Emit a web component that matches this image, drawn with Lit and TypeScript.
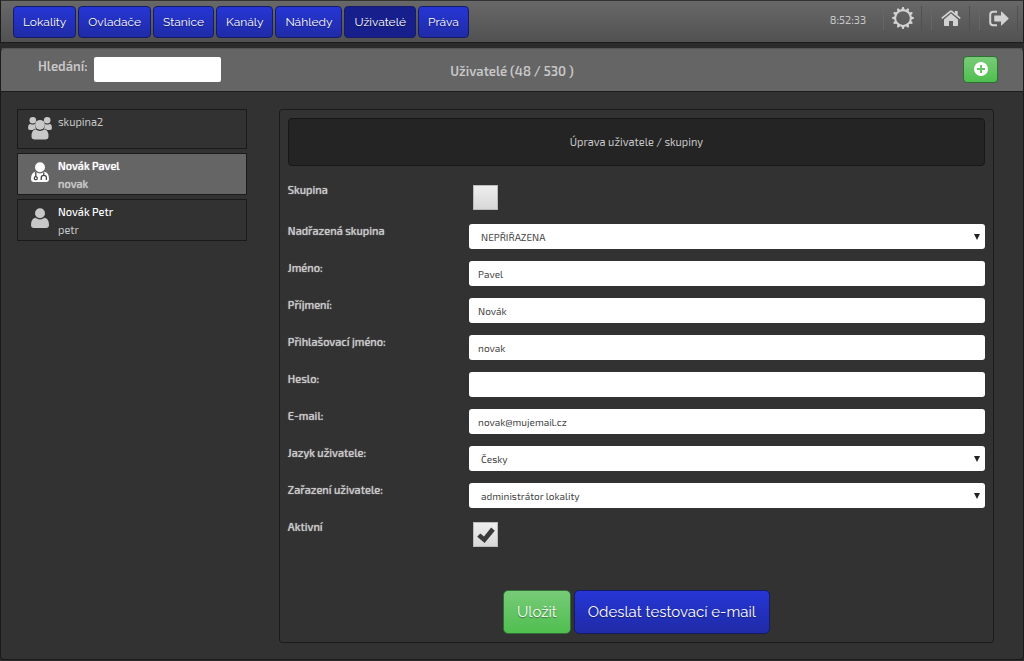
import { LitElement, html, css, svg, nothing } from "lit";
import { customElement, state } from "lit/decorators.js";

type IconName = "gear" | "home" | "exit" | "plus" | "group" | "medic" | "user" | "check";

const gearTeeth = Array.from({ length: 12 }, (_, i) => {
  const at = (deg: number, r: number) => {
    const a = ((deg - 90) * Math.PI) / 180;
    return `${(12 + r * Math.cos(a)).toFixed(2)} ${(12 + r * Math.sin(a)).toFixed(2)}`;
  };
  const d = i * 30;
  return `${i ? "L" : "M"}${at(d - 10, 9.6)}L${at(d - 4, 11.9)}L${at(d + 4, 11.9)}L${at(d + 10, 9.6)}`;
}).join("");

const icons: Record<IconName, { box: string; art: unknown }> = {
  gear: {
    box: "0 0 24 24",
    art: svg`<path fill-rule="evenodd" d="${gearTeeth}ZM12 4.500a7.500 7.500 0 1 0 0 15a7.500 7.500 0 1 0 0-15Z"/>`,
  },
  home: {
    box: "0 0 20 17",
    art: svg`<path d="M10 3.6 17 9.4V15.3Q17 16 16.3 16H12V11H8V16H3.7Q3 16 3 15.300V9.400Z"/><path d="M10 .2Q10.600.2 11.200.7L14 3V1H16.700V5.200L19.800 7.800 18.700 9.100 10 2 1.300 9.100.2 7.800 8.800.7Q9.400.2 10 .2Z"/>`,
  },
  exit: {
    box: "0 0 20 16",
    art: svg`<path d="M8 1.200H4.200Q1.200 1.200 1.200 4.200V11.800Q1.200 14.800 4.200 14.800H8" fill="none" stroke="currentColor" stroke-width="2"/><path d="M6 5H12V1.500Q12 .6 12.800 1.200L19.400 7.400Q20 8 19.400 8.600L12.800 14.800Q12 15.400 12 14.500V11H6Q5.200 11 5.200 10.200V5.800Q5.200 5 6 5Z"/>`,
  },
  plus: {
    box: "0 0 14 14",
    art: svg`<path fill-rule="evenodd" d="M7 0a7 7 0 1 1 0 14A7 7 0 0 1 7 0ZM6 3V6H3V8H6V11H8V8H11V6H8V3Z"/>`,
  },
  group: {
    box: "0 0 24 23",
    art: svg`<circle cx="4.800" cy="3.800" r="3.300"/><circle cx="19.200" cy="3.800" r="3.300"/><path d="M2 7.200Q4.500 8.800 7 7.600 6.400 10 8 12.200Q6 12.300 4.800 13.500H2.200Q0 13.500 0 11.500 0 8 2 7.200ZM22 7.200Q19.500 8.800 17 7.600 17.600 10 16 12.200 18 12.300 19.200 13.500H21.800Q24 13.500 24 11.500 24 8 22 7.200Z"/><circle cx="12" cy="8.300" r="4.900"/><path d="M7.500 12.800Q12 16 16.500 12.800 20.500 13.500 20.500 20 20.500 23 17.300 23H6.700Q3.500 23 3.500 20 3.500 13.500 7.500 12.800Z"/>`,
  },
  medic: {
    box: "0 0 18 20",
    art: svg`<circle cx="9" cy="5.200" r="5"/><path d="M4.500 9.800Q9 13 13.500 9.800 18 10.700 18 17 18 20 15 20H3Q0 20 0 17 0 10.700 4.500 9.800Z"/><g fill="none" stroke="#444" stroke-width="1.300"><path d="M4.800 10V14.800"/><circle cx="4.800" cy="16.200" r="1.500"/><path d="M12.800 10.500V13.200M10.200 18V15.700Q10.200 13.300 12.800 13.300T15.400 15.700V18"/></g>`,
  },
  user: {
    box: "0 0 18 20",
    art: svg`<circle cx="9" cy="5.200" r="5"/><path d="M4.500 9.800Q9 13 13.500 9.800 18 10.700 18 17 18 20 15 20H3Q0 20 0 17 0 10.700 4.500 9.800Z"/>`,
  },
  check: {
    box: "0 0 18 18",
    art: svg`<path d="M3.300 7.400 7 10.500 14.200 1.400 17.800 4.700 7.600 17 .2 10.700Z"/>`,
  },
};

const icon = (name: IconName, size: string) =>
  html`<svg class="icon ${size}" viewBox=${icons[name].box} aria-hidden="true">${icons[name].art}</svg>`;

interface Field {
  id: string;
  label: string;
  kind: "text" | "password" | "email" | "select";
  value: string;
}

const fields: Field[] = [
  { id: "parent", label: "Nadřazená skupina", kind: "select", value: "NEPŘIŘAZENA" },
  { id: "first", label: "Jméno:", kind: "text", value: "Pavel" },
  { id: "last", label: "Příjmení:", kind: "text", value: "Novák" },
  { id: "login", label: "Přihlašovací jméno:", kind: "text", value: "novak" },
  { id: "password", label: "Heslo:", kind: "password", value: "" },
  { id: "email", label: "E-mail:", kind: "email", value: "novak@mujemail.cz" },
  { id: "language", label: "Jazyk uživatele:", kind: "select", value: "Česky" },
  { id: "role", label: "Zařazení uživatele:", kind: "select", value: "administrátor lokality" },
];

const people: { icon: IconName; name?: string; login: string }[] = [
  { icon: "group", login: "skupina2" },
  { icon: "medic", name: "Novák Pavel", login: "novak" },
  { icon: "user", name: "Novák Petr", login: "petr" },
];

@customElement("app-root")
export class AppRoot extends LitElement {
  @state() private tab = "Uživatelé";
  @state() private selected = 1;
  @state() private isGroup = false;
  @state() private active = true;

  static styles = css`
    :host {
      display: flex;
      flex-direction: column;
      min-height: 100vh;
      box-sizing: border-box;
      background: #2b2b2b;
      color: #c8c8c8;
      font: 11px/18px "Exo 2", Roboto, "Open Sans", sans-serif;
    }
    *, *::before { box-sizing: border-box; }
    button, input, select { font: inherit; margin: 0; }
    button { cursor: pointer; }
    .icon { display: block; fill: currentColor; flex: none; }
    .i24 { width: 24px; height: 24px; }
    .i22 { width: 22px; height: 22px; }
    .i20 { width: 20px; height: 17px; }
    .i18 { width: 18px; height: 20px; }
    .i14 { width: 14px; height: 14px; }

    .topbar {
      display: flex;
      align-items: flex-start;
      height: 43px;
      padding: 5px 5px 0 12px;
      border: 1px solid #1c1c1c;
      border-top-color: #333;
      background: linear-gradient(#686868, #515151);
    }
    .tabs { display: flex; gap: 2px; }
    .btn {
      border: 1px solid #151b66;
      border-radius: 4px;
      background: linear-gradient(#2636d6, #1f2ba6);
      color: #fff;
      font-family: Raleway, Lato, sans-serif;
      text-shadow: 0 1px 1px rgba(0, 0, 0, 0.4);
      white-space: nowrap;
    }
    .tab { height: 32px; padding: 0 9px; font-size: 12px; }
    .tab.on { background: #161f8c; }
    .tools { display: flex; align-items: flex-start; margin-left: auto; }
    .clock { margin: 5px 17px 0 0; }
    .toolset { display: flex; gap: 9px; }
    .tool {
      display: flex;
      align-items: center;
      justify-content: center;
      width: 39px;
      height: 24px;
      color: #d2d2d2;
      border-left: 1px solid #666;
      border-right: 1px solid #505050;
    }

    .subbar {
      display: grid;
      grid-template-columns: 1fr auto 1fr;
      align-items: center;
      height: 44px;
      margin-top: 5px;
      padding: 0 25px 2px;
      border: 1px solid #1c1c1c;
      border-top-color: #555;
      border-radius: 4px 4px 0 0;
      background: #656565;
      font-size: 13px;
      font-weight: 600;
    }
    .search { display: flex; align-items: flex-start; gap: 7px; padding-left: 12px; }
    .search input {
      width: 127px;
      height: 25px;
      padding: 0 8px;
      border: 0;
      border-radius: 2px;
      background: #fff;
    }
    .title { margin: 0; padding-top: 4px; font: inherit; }
    .add {
      display: grid;
      place-items: center;
      justify-self: end;
      width: 35px;
      height: 27px;
      padding: 0;
    }
    .green {
      background: linear-gradient(#78cb78, #4fbf4f);
      border-color: #2f6e35;
    }

    .body {
      flex: 1;
      display: grid;
      grid-template-columns: 9fr 28fr;
      gap: 32px;
      align-items: start;
      padding: 17px 29px 16px 16px;
      border: 1px solid #1a1a1a;
      border-top: 0;
      border-radius: 0 0 4px 4px;
      margin-bottom: 1px;
      background: #323232;
    }
    .list { display: grid; gap: 4px; margin: 0; padding: 0; list-style: none; }
    .person {
      display: grid;
      grid-template-columns: 24px 1fr;
      gap: 6px;
      width: 100%;
      min-height: 40px;
      padding: 3px 10px 1px;
      border: 1px solid #1a1a1a;
      background: none;
      color: inherit;
      text-align: left;
      align-content: start;
    }
    .person.on { background: #656565; }
    .person .icon { justify-self: center; margin-top: 5px; }
    .person .i24 { margin-top: 3px; }
    .person.on .icon { color: #fff; }
    .lines { display: grid; align-content: start; }
    .name { color: #fff; font-weight: 500; }
    .person.on .lines { text-shadow: 0 0 1px currentColor; }
    .person.on .login { font-weight: 500; }

    .panel {
      padding: 8px;
      border: 1px solid #1a1a1a;
      border-radius: 3px;
    }
    .heading {
      margin: 0 0 17px;
      padding: 14px;
      border: 1px solid #171717;
      border-radius: 4px;
      background: #242424;
      font: inherit;
      text-align: center;
    }
    .form { display: grid; gap: 12px; }
    .row { display: grid; grid-template-columns: 26% 1fr; align-items: start; min-height: 25px; }
    .row label { line-height: 14px; font-weight: 500; text-shadow: 0 0 1px currentColor; }
    .first { margin-bottom: 2px; }
    .control {
      width: 100%;
      height: 25px;
      padding: 0 9px;
      border: 0;
      border-radius: 3px;
      background: #fff;
      color: #444;
      font-size: 10px;
    }
    .pick { display: grid; align-items: center; }
    .pick > * { grid-area: 1 / 1; }
    .pick select { appearance: none; padding-left: 12px; padding-right: 20px; }
    .pick svg {
      justify-self: end;
      width: 6px;
      height: 6px;
      margin-right: 5px;
      fill: #222;
      pointer-events: none;
    }
    .tick { display: grid; justify-items: center; align-items: center; width: 25px; margin: 2px 0 0 4px; }
    .tick > * { grid-area: 1 / 1; }
    .tick input {
      appearance: none;
      width: 25px;
      height: 25px;
      border: 1px solid #bbb;
      background: linear-gradient(#eee, #d8d8d8);
    }
    .tick svg { width: 18px; height: 18px; color: #3a3a3a; pointer-events: none; }
    .actions { display: flex; justify-content: center; gap: 3px; margin-top: 31px; }
    .big { height: 44px; padding: 0 13px; font-size: 15px; border-radius: 5px; }
  `;

  private renderField(f: Field) {
    return html`<div class="row">
      <label for=${f.id}>${f.label}</label>
      ${f.kind === "select"
        ? html`<div class="pick">
            <select class="control" id=${f.id}><option>${f.value}</option></select>
            <svg viewBox="0 0 6 6" aria-hidden="true"><path d="M0 0H6L3 6Z" /></svg>
          </div>`
        : html`<input class="control" id=${f.id} type=${f.kind} .value=${f.value} />`}
    </div>`;
  }

  private renderTick(id: string, label: string, on: boolean, set: (v: boolean) => void, extra = "") {
    return html`<div class="row ${extra}">
      <label for=${id}>${label}</label>
      <div class="tick">
        <input type="checkbox" id=${id} .checked=${on}
          @change=${(e: Event) => set((e.target as HTMLInputElement).checked)} />
        ${on ? icon("check", "") : nothing}
      </div>
    </div>`;
  }

  render() {
    const tabs = ["Lokality", "Ovladače", "Stanice", "Kanály", "Náhledy", "Uživatelé", "Práva"];
    return html`
      <header class="topbar">
        <nav class="tabs">
          ${tabs.map((t) => html`<button class="btn tab ${t === this.tab ? "on" : ""}"
            @click=${() => (this.tab = t)}>${t}</button>`)}
        </nav>
        <div class="tools">
          <time class="clock">8:52:33</time>
          <div class="toolset">
            <a class="tool" href="#settings" aria-label="Nastavení">${icon("gear", "i22")}</a>
            <a class="tool" href="#home" aria-label="Domů">${icon("home", "i20")}</a>
            <a class="tool" href="#logout" aria-label="Odhlásit">${icon("exit", "i20")}</a>
          </div>
        </div>
      </header>
      <section class="subbar">
        <div class="search">
          <label for="search">Hledání:</label>
          <input id="search" type="search" />
        </div>
        <h1 class="title">Uživatelé (48 / 530 )</h1>
        <button class="btn green add" aria-label="Přidat">${icon("plus", "i14")}</button>
      </section>
      <main class="body">
        <ul class="list">
          ${people.map((p, i) => html`<li>
            <button class="person ${i === this.selected ? "on" : ""}" @click=${() => (this.selected = i)}>
              ${icon(p.icon, p.icon === "group" ? "i24" : "i18")}
              <span class="lines">
                ${p.name ? html`<span class="name">${p.name}</span>` : nothing}
                <span class="login">${p.login}</span>
              </span>
            </button>
          </li>`)}
        </ul>
        <section class="panel">
          <h2 class="heading">Úprava uživatele / skupiny</h2>
          <form class="form" @submit=${(e: Event) => e.preventDefault()}>
            ${this.renderTick("group", "Skupina", this.isGroup, (v) => (this.isGroup = v), "first")}
            ${fields.map((f) => this.renderField(f))}
            ${this.renderTick("active", "Aktivní", this.active, (v) => (this.active = v))}
            <div class="actions">
              <button class="btn big green">Uložit</button>
              <button class="btn big" type="button">Odeslat testovací e-mail</button>
            </div>
          </form>
        </section>
      </main>
    `;
  }
}
